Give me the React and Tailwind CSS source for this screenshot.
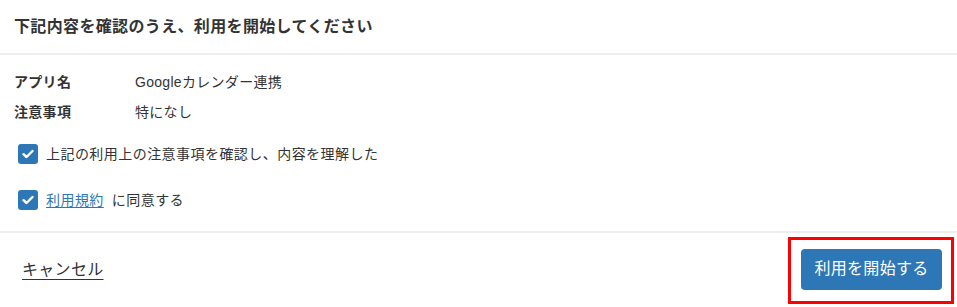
import { useState } from "react";

const font = { fontFamily: '"Liberation Sans", "Noto Sans CJK JP", sans-serif' };

function Check({ checked, onChange, children }) {
  return (
    <label className="flex items-center gap-[8px] cursor-pointer">
      <span
        onClick={onChange}
        className="flex h-[20px] w-[20px] items-center justify-center rounded-[3px] bg-[#2e77b6]"
      >
        {checked && (
          <svg width="12" height="10" viewBox="0 0 12 10">
            <path d="M1.5 5.2 L4.5 8 L10.5 2" fill="none" stroke="#fff" strokeWidth="2.4" strokeLinecap="round" strokeLinejoin="round" />
          </svg>
        )}
      </span>
      <span className="text-[14px] leading-[20px] tracking-[0.45px] text-[#333]">{children}</span>
    </label>
  );
}

export default function App() {
  const [a, setA] = useState(true);
  const [b, setB] = useState(true);

  return (
    <div className="w-full bg-white" style={font}>
      <div className="flex h-[55px] items-center border-b-2 border-[#eeeeee] px-[14px]">
        <h1 className="text-[16px] font-bold tracking-[0.35px] text-[#333]">下記内容を確認のうえ、利用を開始してください</h1>
      </div>

      <div className="border-b-2 border-[#eeeeee] px-[14px] pt-[17px] pb-[21px]">
        <div className="grid grid-cols-[121px_1fr] gap-y-[10px] text-[14px] leading-[20px] tracking-[0.3px] text-[#333]">
          <div className="font-bold">アプリ名</div>
          <div>Googleカレンダー連携</div>
          <div className="font-bold">注意事項</div>
          <div>特になし</div>
        </div>
        <div className="mt-[22px] flex flex-col gap-[26px] pl-[4px]">
          <Check checked={a} onChange={() => setA(!a)}>上記の利用上の注意事項を確認し、内容を理解した</Check>
          <Check checked={b} onChange={() => setB(!b)}>
            <a href="#" className="text-[#2e77b6] underline underline-offset-2">利用規約</a>
            <span className="ml-[8px]">に同意する</span>
          </Check>
        </div>
      </div>

      <div className="flex h-[75px] items-center justify-between border-b border-[#f2f2f2] pl-[22px] pr-[3px]">
        <a href="#" className="text-[16px] leading-[22px] tracking-[0.3px] text-[#333] underline underline-offset-4">キャンセル</a>
        <div className="border-[3px] border-[#ff0000] pt-[9px] pb-[11px] pl-[10px] pr-[9px]">
          <button className="h-[41px] w-[141px] rounded-[4px] bg-[#2e77b6] text-[16px] tracking-[0.3px] text-white">利用を開始する</button>
        </div>
      </div>
    </div>
  );
}
